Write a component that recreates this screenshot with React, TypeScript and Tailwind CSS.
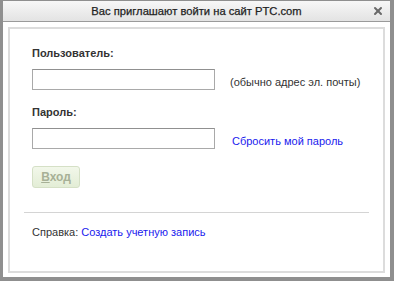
import { X } from "lucide-react";

export default function App() {
  return (
    <div className="w-[394px] h-[281px] bg-[#8f8f8f] pt-px pl-[3px] pr-[4px] pb-[4px] flex flex-col font-['Liberation_Sans',Arial,sans-serif]">
      <div className="flex-1 flex flex-col bg-white">
        <div className="relative h-[21px] shrink-0 flex items-center justify-center border-b border-[#9a9a9a] bg-gradient-to-b from-[#f7f7f7] to-[#e3e3e3]">
          <span className="text-[11.2px] text-[#222] [-webkit-text-stroke:0.25px_#222]">Вас приглашают войти на сайт PTC.com</span>
          <X className="absolute right-[6px] top-[4px] h-[12px] w-[12px] text-[#6a6a6a]" strokeWidth={4} />
        </div>
        <div className="flex-1 px-[5px] pt-[5px] pb-[4px] flex">
          <div className="flex-1 border-[2px] border-[#dcdcdc] flex flex-col pt-[17px] text-[11px] text-[#333]">
            <div className="pl-[22px] flex flex-col">
              <div className="font-bold leading-[14px] h-[14px]">Пользователь:</div>
              <div className="mt-[9px] flex items-center">
                <input className="w-[183px] h-[21px] border border-[#a9a9a9] border-t-[#909090] bg-white outline-none" />
                <span className="ml-[15px] mt-[5px]">(обычно адрес эл. почты)</span>
              </div>
              <div className="mt-[14px] font-bold leading-[14px] h-[14px]">Пароль:</div>
              <div className="mt-[9px] flex items-center">
                <input type="password" className="w-[183px] h-[21px] border border-[#a9a9a9] border-t-[#909090] bg-white outline-none" />
                <a className="ml-[17px] mt-[5px] text-[#1a1aee] cursor-pointer">Сбросить мой пароль</a>
              </div>
              <button className="mt-[17px] w-[48px] h-[22px] rounded-[3px] border border-[#d5e0c6] bg-gradient-to-b from-[#f2f7ea] to-[#e3edd6] text-[12px] font-bold text-[#a7b096] flex items-center justify-center">
                <span><span className="underline">В</span>ход</span>
              </button>
            </div>
            <div className="mt-[24px] ml-[14px] mr-[14px] h-px bg-[#d4d4d4]" />
            <div className="pl-[22px] mt-[12px] leading-[14px]">
              <span>Справка: </span>
              <a className="text-[#1a1aee] cursor-pointer">Создать учетную запись</a>
            </div>
          </div>
        </div>
      </div>
    </div>
  );
}
